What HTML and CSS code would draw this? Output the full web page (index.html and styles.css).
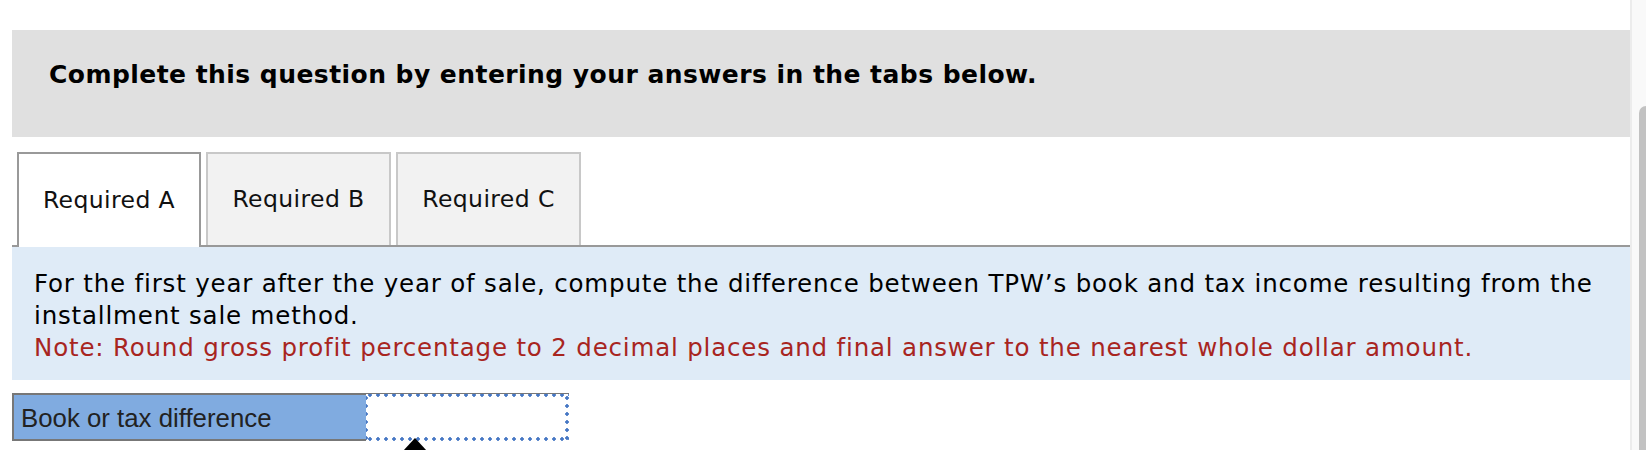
FILE: index.html
```html
<!DOCTYPE html>
<html>
<head>
    <meta charset="UTF-8">
    <title>Required A</title>
    <link rel="stylesheet" href="styles.css">
</head>
<body>
<div class="window">
    <div class="page">
        <div class="banner">
            <h2>Complete this question by entering your answers in the tabs below.</h2>
        </div>

        <div class="tabs">
            <div class="tab active">Required A</div>
            <div class="tab">Required B</div>
            <div class="tab">Required C</div>
        </div>

        <div class="question">
            For the first year after the year of sale, compute the difference between TPW’s book and tax income resulting from the installment sale method.
            <br>
            <span class="note">Note: Round gross profit percentage to 2 decimal places and final answer to the nearest whole dollar amount.</span>
        </div>

        <div class="answer">
            <div class="answer-label">Book or tax difference</div>
            <div class="answer-input">
                <span class="tip-arrow"></span>
            </div>
        </div>
    </div>

    <!-- fake scrollbar at the right edge -->
    <div class="scrollbar">
        <div class="thumb"></div>
    </div>
</div>
</body>
</html>
```

FILE: styles.css
```css
html, body {
    margin: 0;
    height: 100%;
    overflow: hidden;
    background: #fff;
}

body {
    font-family: "DejaVu Sans", Verdana, sans-serif;
    color: #000;
}

.window {
    display: flex;
    height: 100%;
}

.page {
    flex: 1;
    padding: 30px 0 0 12px;
}

.banner {
    height: 107px;
    box-sizing: border-box;
    padding: 30px 37px 0;
    background: #e0e0e0;
}

.banner h2 {
    margin: 0;
    font-size: 25px;
    line-height: 30px;
    letter-spacing: 0.45px;
    font-weight: bold;
}

.tabs {
    display: flex;
    gap: 5px;
    margin-top: 15px;
    padding-left: 5px;
    border-bottom: 2px solid #999;
}

.tab {
    display: flex;
    align-items: center;
    justify-content: center;
    box-sizing: border-box;
    width: 185px;
    height: 93px;
    padding-bottom: 2px;
    border: 2px solid #c8c8c8;
    border-bottom: 0;
    background: #f2f2f2;
    font-size: 23.5px;
    letter-spacing: 0.4px;
    color: #111;
}

.tab.active {
    width: 184px;
    height: 95px;
    margin-bottom: -2px;
    border-color: #999;
    background: #fff;
}

.question {
    padding: 21px 6px 16px 22px;
    background: #dfebf7;
    font-size: 24.5px;
    line-height: 32px;
    letter-spacing: 0.82px;
}

.note {
    color: #a8251f;
}

.answer {
    display: flex;
    margin-top: 13px;
    width: 557px;
    height: 46px;
    border-top: 2px solid #777;
}

.answer-label {
    display: flex;
    align-items: center;
    box-sizing: border-box;
    width: 354px;
    padding: 2px 0 0 7px;
    border-left: 2px solid #777;
    border-bottom: 2px solid #777;
    background: #80abe0;
    font-family: "Liberation Sans", Arial, sans-serif;
    font-size: 25.8px;
    color: #222;
}

.answer-input {
    flex: 1;
    position: relative;
    margin-top: -1px;
    background:
        radial-gradient(circle, #4677c4 1.5px, transparent 2px) 0 -1px / 8px 4px repeat-x,
        radial-gradient(circle, #4677c4 1.5px, transparent 2px) 0 100% / 8px 4px repeat-x,
        radial-gradient(circle, #4677c4 1.5px, transparent 2px) -2px 0 / 4px 8px repeat-y,
        radial-gradient(circle, #4677c4 1.5px, transparent 2px) 100% 0 / 4px 8px repeat-y,
        #fff;
}

.tip-arrow {
    position: absolute;
    left: 37px;
    top: 44px;
    border-left: 12px solid transparent;
    border-right: 12px solid transparent;
    border-bottom: 13px solid #000;
}

.scrollbar {
    display: flex;
    width: 16px;
    box-sizing: border-box;
    padding: 106px 0 0 7px;
    border-left: 2px solid #ececec;
    background: #f9f9f9;
}

.thumb {
    flex: 1;
    background: #c2c2c2;
    border-radius: 7px 0 0 0;
}
```
